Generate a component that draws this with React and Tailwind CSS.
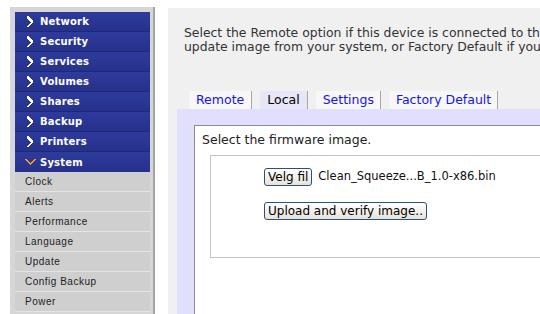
import React from 'react';

const blueItems = ['Network', 'Security', 'Services', 'Volumes', 'Shares', 'Backup', 'Printers'];
const subItems = ['Clock', 'Alerts', 'Performance', 'Language', 'Update', 'Config Backup', 'Power'];

function Chevron() {
  return (
    <svg width="8" height="11" viewBox="0 0 8 11" className="shrink-0" shapeRendering="crispEdges">
      <path d="M1 0h2v1h1v1h1v1h1v1h1v3h-1v1h-1v1h-1v1h-1v1h-2v-1h1v-1h1v-1h1v-1h1v-1h-1v-1h-1v-1h-1v-1h-1z" fill="#fff" />
    </svg>
  );
}

function ChevronDown() {
  return (
    <svg width="11" height="8" viewBox="0 0 11 8" className="shrink-0" shapeRendering="crispEdges">
      <path d="M0 1h2v1h1v1h1v1h1v1h1v-1h1v-1h1v-1h1v-1h2v1h-1v1h-1v1h-1v1h-1v1h-1v1h-1v-1h-1v-1h-1v-1h-1v-1h-1z" fill="#f4a21c" />
    </svg>
  );
}

function XpButton({ children }) {
  return (
    <button className="h-[18px] px-[3px] rounded-[3px] border border-[#2c4f7f] bg-gradient-to-b from-[#ffffff] to-[#e6e3d8] text-[12px] leading-none text-black">
      {children}
    </button>
  );
}

const tahoma = { fontFamily: '"DejaVu Sans", Tahoma, sans-serif' };

export default function App() {
  return (
    <div className="flex w-[540px] h-[314px] overflow-hidden bg-white" style={{ fontFamily: '"DejaVu Sans", Verdana, sans-serif' }}>
      {/* sidebar */}
      <div className="ml-[10px] mt-[7px] w-[145px] shrink-0 bg-[#d6d6d6] pt-[5px] pl-[5px] pr-[3px] border-r-2 border-[#a4a4a4]">
        {blueItems.map(item => (
          <div key={item} className="h-[20px] flex items-center gap-[6px] pl-[11px] bg-gradient-to-b from-[#2e3b9c] to-[#25318a] border-b border-[#1e2876] text-white font-bold text-[10px] tracking-[0.2px]">
            <Chevron />
            <span>{item}</span>
          </div>
        ))}
        <div className="h-[20px] flex items-center gap-[4px] pl-[10px] bg-gradient-to-b from-[#2e3b9c] to-[#25318a] text-white font-bold text-[10px] tracking-[0.2px]">
          <ChevronDown />
          <span>System</span>
        </div>
        {subItems.map(item => (
          <div key={item} className="h-[20px] flex items-center pl-[10px] bg-[#cfcfcf] border-b border-[#e4e4e4] text-[#222] text-[10px] tracking-[0.5px]" style={{ fontFamily: '"Liberation Sans", Arial, sans-serif' }}>
            {item}
          </div>
        ))}
      </div>

      {/* main */}
      <div className="ml-[13px] mt-[8px] flex-1 bg-[#f0f0f0] flex flex-col min-w-0">
        <div className="pl-[16px] pt-[18px] text-[12.4px] leading-[14px] text-[#333] whitespace-nowrap overflow-hidden" style={tahoma}>
          <div>Select the Remote option if this device is connected to the Internet, Local to</div>
          <div>update image from your system, or Factory Default if you want to</div>
        </div>

        <div className="ml-[9px] mt-[37px] flex-1 flex flex-col">
          <div className="flex items-end h-[18px] pl-[12px] gap-[8px] text-[12.5px]" style={tahoma}>
            <div className="h-[18px] flex items-center pl-[7px] pr-[7px] bg-[#f7f7f7] border-r border-[#a8a8a8] text-[#1414e6]">Remote</div>
            <div className="h-[18px] flex items-center pl-[7px] pr-[7px] bg-[#e6e6f6] border-r border-[#a8a8a8] text-black">Local</div>
            <div className="h-[18px] flex items-center pl-[7px] pr-[6px] bg-[#f7f7f7] border-r border-[#a8a8a8] text-[#1414e6]">Settings</div>
            <div className="h-[18px] flex items-center pl-[7px] pr-[6px] bg-[#f7f7f7] border-r border-[#a8a8a8] text-[#1414e6]">Factory Default</div>
          </div>
          <div className="flex-1 bg-[#e0e0fc] pl-[17px] pt-[16px] flex">
            <div className="flex-1 bg-white border-l border-t border-[#8c8c8c] pl-[7px] pt-[6px]">
              <div className="text-[12.5px] leading-[16px] text-[#222]" style={tahoma}>Select the firmware image.</div>
              <div className="ml-[8px] mt-[7px] h-[103px] border border-[#c4c4c4] border-r-0 pl-[53px] pt-[12px]">
                <div className="flex items-center gap-[6px]">
                  <XpButton>Velg fil</XpButton>
                  <span className="text-[11.5px] text-[#111] whitespace-nowrap" style={tahoma}>Clean_Squeeze...B_1.0-x86.bin</span>
                </div>
                <div className="mt-[16px] flex">
                  <XpButton>Upload and verify image..</XpButton>
                </div>
              </div>
            </div>
          </div>
        </div>
      </div>
    </div>
  );
}
